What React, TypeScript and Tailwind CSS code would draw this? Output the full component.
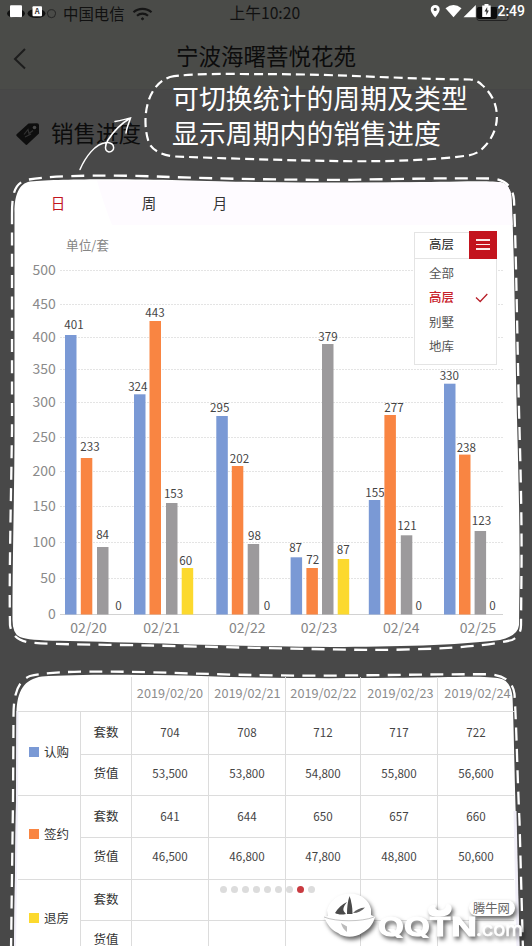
import React, { useState } from "react";

const BLUE = "#7a99d5";
const ORANGE = "#f98542";
const GREY = "#9c9a9c";
const YELLOW = "#fcd92e";

const gridLines = [
  { label: "500", y: 270.5 },
  { label: "450", y: 304.5 },
  { label: "400", y: 337.5 },
  { label: "350", y: 369.5 },
  { label: "300", y: 402.5 },
  { label: "250", y: 437.5 },
  { label: "200", y: 471.5 },
  { label: "150", y: 506.5 },
  { label: "100", y: 542.5 },
  { label: "50", y: 578.5 },
  { label: "0", y: 614.5 },
];

// x / top of the bar, tx / ty of the value above it
const bars = [
  { x: 65, top: 335, fill: BLUE, value: 401, tx: 74, ty: 328.6 },
  { x: 80.8, top: 458, fill: ORANGE, value: 233, tx: 90, ty: 451.3 },
  { x: 97, top: 547, fill: GREY, value: 84, tx: 102.6, ty: 539.3 },
  { x: 113, top: 614, fill: YELLOW, value: 0, tx: 118.5, ty: 610.3 },
  { x: 134, top: 394.3, fill: BLUE, value: 324, tx: 137.8, ty: 391 },
  { x: 149.5, top: 321, fill: ORANGE, value: 443, tx: 155, ty: 316.6 },
  { x: 166, top: 503, fill: GREY, value: 153, tx: 173.6, ty: 498.3 },
  { x: 181.7, top: 568, fill: YELLOW, value: 60, tx: 185.7, ty: 565 },
  { x: 216.3, top: 416, fill: BLUE, value: 295, tx: 219.7, ty: 412 },
  { x: 231.8, top: 466, fill: ORANGE, value: 202, tx: 239.5, ty: 463 },
  { x: 247.7, top: 544, fill: GREY, value: 98, tx: 254.4, ty: 539.6 },
  { x: 263, top: 614, fill: YELLOW, value: 0, tx: 267, ty: 610.3 },
  { x: 290.6, top: 557.3, fill: BLUE, value: 87, tx: 295.6, ty: 551.6 },
  { x: 306.4, top: 568, fill: ORANGE, value: 72, tx: 312.8, ty: 564.3 },
  { x: 322, top: 344, fill: GREY, value: 379, tx: 328, ty: 340.8 },
  { x: 337.7, top: 559, fill: YELLOW, value: 87, tx: 343.2, ty: 553.6 },
  { x: 368.8, top: 500, fill: BLUE, value: 155, tx: 375, ty: 497 },
  { x: 384.4, top: 415, fill: ORANGE, value: 277, tx: 394, ty: 412 },
  { x: 400.8, top: 535.3, fill: GREY, value: 121, tx: 407, ty: 529.5 },
  { x: 413, top: 614, fill: YELLOW, value: 0, tx: 418.6, ty: 609.6 },
  { x: 444, top: 383.7, fill: BLUE, value: 330, tx: 449.3, ty: 380 },
  { x: 459, top: 454.6, fill: ORANGE, value: 238, tx: 466.3, ty: 451.6 },
  { x: 474.6, top: 531, fill: GREY, value: 123, tx: 481.5, ty: 524.6 },
  { x: 487, top: 614, fill: YELLOW, value: 0, tx: 492.5, ty: 609.6 },
];

const days = [
  { label: "02/20", x: 88.5 },
  { label: "02/21", x: 161.5 },
  { label: "02/22", x: 247.3 },
  { label: "02/23", x: 319 },
  { label: "02/24", x: 401.3 },
  { label: "02/25", x: 478 },
];

const dates = ["2019/02/20", "2019/02/21", "2019/02/22", "2019/02/23", "2019/02/24"];

const groups = [
  {
    name: "认购",
    color: "bg-[#7a99d5]",
    rows: "grid-rows-[43px_41px]",
    labelPad: "pb-[3px]",
    count: ["704", "708", "712", "717", "722"],
    amount: ["53,500", "53,800", "54,800", "55,800", "56,600"],
  },
  {
    name: "签约",
    color: "bg-[#f98542]",
    rows: "grid-rows-[42px_42px]",
    labelPad: "pb-[7px]",
    count: ["641", "644", "650", "657", "660"],
    amount: ["46,500", "46,800", "47,800", "48,800", "50,600"],
  },
  {
    name: "退房",
    color: "bg-[#fcd92e]",
    rows: "grid-rows-[41px_41px]",
    labelPad: "pb-[5px]",
    count: ["", "", "", "", ""],
    amount: ["", "", "", "", ""],
  },
];

const types = ["全部", "高层", "别墅", "地库"];
const periods = [
  { label: "日", style: "ml-[50px] w-4" },
  { label: "周", style: "ml-[75px] w-4" },
  { label: "月", style: "ml-[55px] w-4" },
];

const StatusBar = () => (
  <div className="relative flex h-7 items-center bg-[#4a4b48] text-[15.4px] text-[#111]">
    <svg className="absolute left-0 top-0" width="60" height="28">
      <ellipse cx="16" cy="13.5" rx="9" ry="4.500" fill="#111" />
      <ellipse cx="36.500" cy="13.5" rx="9" ry="4.500" fill="#111" />
      <rect x="10" y="5.300" width="12" height="12" rx="1" fill="#fff" />
      <rect x="32.500" y="6.300" width="9.500" height="10" rx="1" fill="#fff" />
      <text x="37.200" y="14" fontSize="7.500" fontWeight="700" textAnchor="middle" fill="#333">
        A
      </text>
      <circle cx="51.500" cy="13.700" r="4" fill="none" stroke="#1a1a1a" strokeWidth="0.8" />
    </svg>
    <span className="-mt-[2px] ml-[63px] leading-7">中国电信</span>
    <svg className="ml-[7px]" width="21" height="16" viewBox="0 0 21 16" fill="none" stroke="#161616" strokeWidth="2.200">
      <path d="M1.500 6.300c5-4.600 13-4.600 18 0" />
      <path d="M5 9.800c3.200-2.900 7.800-2.900 11 0" />
      <circle cx="10.500" cy="12.800" r="1" fill="#161616" strokeWidth="1" />
    </svg>
    <span className="-mt-[2px] ml-[77px] text-[15.700px] leading-7">上午10:20</span>
    <svg className="absolute right-0 top-0" width="107" height="28" viewBox="425 0 107 28">
      <rect x="477" y="7.500" width="31" height="13" rx="2" fill="none" stroke="#222" />
      <rect x="477" y="7" width="20" height="12" rx="2" fill="#0c0c0c" />
      <path
        d="M435.200 5c-2.600 0-4.500 1.900-4.500 4.300 0 3.200 4.500 8.200 4.500 8.200s4.500-5 4.500-8.200c0-2.400-1.900-4.300-4.500-4.300zm0 2.800a1.600 1.600 0 1 1 0 3.200 1.600 1.600 0 0 1 0-3.200z"
        fill="#fff"
      />
      <path d="M445.500 8.200q8-6.400 16 0l-8 9z" fill="#fff" />
      <path d="M475.800 5v12.300h-12.300z" fill="#fff" />
      <path d="M484.500 4h4v1.500h2.200v11.500h-8.500V5.500h2.300z" fill="#fff" />
      <path d="M487.200 7l-2.700 4.600h1.800v3.600l2.500-4.700h-1.600z" fill="#333" />
    </svg>
    <span className="absolute right-[7px] top-0 font-['Roboto',sans-serif] text-[14px] leading-[23px] font-medium text-white">
      2:49
    </span>
  </div>
);

const Header = () => (
  <header className="relative flex h-[62px] items-center justify-center border-b border-[#464646] bg-[#4a4b48]">
    <svg className="absolute left-[13px] top-5" width="14" height="22" fill="none" stroke="#1d1d1d" strokeWidth="2">
      <path d="M12 1L2 11l10 9.500" />
    </svg>
    <h1 className="pb-[6px] text-[22.5px] text-[#0c0c0c]">宁波海曙菩悦花苑</h1>
  </header>
);

const SectionTitle = () => (
  <div className="relative flex h-[89px] items-center pl-4">
    <svg className="-mt-[2px]" width="24" height="24" viewBox="0 0 24 24">
      <path
        d="M12.500 1.500L21 1.200a2 2 0 0 1 2 2v8.300L11.500 22.300a1.500 1.500 0 0 1-2.200 0L.9 14.300a1.500 1.500 0 0 1 0-2.200z"
        fill="#0e0e0e"
      />
      <path d="M8 12.500l4-5 1 4 4-3M9 15l6-3" stroke="#333" strokeWidth="1.200" fill="none" />
      <circle cx="18.500" cy="5.500" r="1.800" fill="#484848" />
    </svg>
    <h2 className="ml-[11px] pb-[3px] text-[22.5px] text-[#0c0c0c]">销售进度</h2>
  </div>
);

// hand drawn bubble and arrow lying over the page header
const Callout = () => (
  <div className="absolute left-[75px] top-[68px] h-[106px] w-[430px]">
    <svg className="absolute inset-0" width="430" height="106" viewBox="75 68 430 106" fill="none" stroke="#fff">
      <path
        d="M170 77C190 73 235 74 270 74.200C340 74 400 79 470 79.500Q477 80 482 85C501 101 502 129 484 147Q478 154 468 155.500C430 160.500 390 161.500 345 161.200C290 160.500 230 158.500 175 156.500Q155 154.500 149 143C141 120 146 85 170 77Z"
        strokeWidth="2.200"
        strokeDasharray="9 5"
      />
      <path
        d="M80 169.500C85 158 95 143 107 142.500C116 143 115 152 109 152C104 151 105 145 108 140C115 129 122 123 130.500 118M115 121.500C121 120.500 126 119 130.500 118C129 123 126.500 128 126 133"
        strokeWidth="1.500"
        strokeLinecap="round"
      />
    </svg>
    <p className="relative pl-[97px] pt-[13px] text-[26.9px] leading-[34.500px] whitespace-nowrap text-white">
      可切换统计的周期及类型
      <br />
      显示周期内的销售进度
    </p>
  </div>
);

const TypeSelect = () => {
  const [selected, setSelected] = useState("高层");

  return (
    <div className="absolute left-[414px] top-[53px] w-[83px] border border-[#e4e4e4] bg-white text-[12.5px]">
      <div className="-mt-[2px] -mr-px flex h-7 items-center justify-between border-b border-[#e4e4e4] pl-[14px]">
        <span className="text-[#222]">{selected}</span>
        <button className="flex h-7 w-7 flex-col items-center justify-center gap-[3px] bg-[#c3141e]">
          <i className="h-[1.5px] w-[14px] bg-[#fbeaea]" />
          <i className="h-[1.5px] w-[14px] bg-[#fbeaea]" />
          <i className="h-[1.5px] w-[14px] bg-[#fbeaea]" />
        </button>
      </div>
      <ul className="pb-[5px] pt-[2px]">
        {types.map((type) => (
          <li
            key={type}
            onClick={() => setSelected(type)}
            className={`flex h-[24.4px] cursor-pointer items-center justify-between pl-[14px] pr-2 ${
              type === selected ? "font-medium text-[#c8202a]" : "text-[#555]"
            }`}
          >
            {type}
            {type === selected && (
              <svg width="13" height="10" fill="none" stroke="#b8202a" strokeWidth="1.300">
                <path d="M1 4.500l4.200 4L12.300 1" />
              </svg>
            )}
          </li>
        ))}
      </ul>
    </div>
  );
};

const Chart = () => (
  <svg className="relative block" width="532" height="425" viewBox="0 225 532 425">
    <text x="66" y="250.300" fontSize="12.700" fill="#858585">
      单位/套
    </text>
    {gridLines.map((line) => (
      <g key={line.label}>
        <line
          x1="60"
          x2="503"
          y1={line.y}
          y2={line.y}
          stroke={line.label === "0" ? "#d2d2d2" : "#e4e4e4"}
          strokeDasharray={line.label === "0" ? undefined : "2 1"}
        />
        <text x="55.700" y={line.y + 4.5} fontSize="14" textAnchor="end" fill="#8a8a8a">
          {line.label}
        </text>
      </g>
    ))}
    {bars.map((bar) => (
      <g key={bar.x}>
        {bar.value > 0 && <rect x={bar.x} y={bar.top} width="11.500" height={614.5 - bar.top} fill={bar.fill} />}
        <text x={bar.tx} y={bar.ty} fontSize="11.600" textAnchor="middle" fill="#444">
          {bar.value}
        </text>
      </g>
    ))}
    {days.map((day) => (
      <text key={day.label} x={day.x} y="633.300" fontSize="14" textAnchor="middle" fill="#858585">
        {day.label}
      </text>
    ))}
  </svg>
);

const ChartCard = () => {
  const [period, setPeriod] = useState("日");

  return (
    <section className="relative h-[493px]">
      <svg className="absolute left-0 -top-2" width="532" height="490" viewBox="0 171 532 490" fill="none">
        <path
          d="M14.500 212C14.500 195 19 183.500 30 181.500C60 178.500 130 178.800 180 180.200C260 183 380 183 440 181.800C465 181 490 180.800 500 182Q510 184 511.500 196C514 240 515 330 516.500 400C518 460 520 520 519.500 580L519 625Q518 636 500 640C450 646 370 647.500 300 646.800C220 646 120 642 60 640.800Q28 640.500 20 637Q12.500 634 12.500 620C12.500 540 15 480 14.500 400Z"
          fill="#fff"
        />
        <path d="M97 180.500Q104 205 112 225H512.500L511 196Q510 184 500 182Q440 182 350 183Q260 183 180 181Z" fill="#fefbff" />
        <path
          d="M12 214C12 192 15 182 29 179.500C60 174.500 120 175 170 177C230 179 290 180 350 179.800C400 179 450 177.800 490 178.500Q512 179 514 200C516 250 517 320 518.500 390C520 450 522 510 521.500 570L521 625Q521 636 512 640C480 648 420 649.800 370 650C300 649 220 647 150 645.500C110 644.500 60 645 30 642.500Q12 640 10 625C9 580 11 500 12 430Z"
          stroke="#fff"
          strokeWidth="2.300"
          strokeDasharray="13 8.300"
        />
      </svg>
      <nav className="relative flex h-[46px] items-center pt-px text-[14.5px] text-[#333]">
        {periods.map((item) => (
          <button
            key={item.label}
            onClick={() => setPeriod(item.label)}
            className={`${item.style} ${item.label === period ? "text-[#c3141e]" : ""}`}
          >
            {item.label}
          </button>
        ))}
      </nav>
      <Chart />
      <TypeSelect />
    </section>
  );
};

const cell = "flex items-center justify-center border-r border-[#dcdcdc] whitespace-nowrap";
const columns = "grid-cols-[51px_77px_77px_75px_77px_76px]";

const TableCard = () => (
  <section className="relative h-[274px]">
    <svg className="absolute left-0 -top-2" width="532" height="283" viewBox="0 663 532 283" fill="none">
      <path
        d="M14 950L16 800L16.500 712C17 690 24 678 42 675.500C80 673 160 673.500 230 676C300 678 390 677 440 676.300C470 675.500 490 675.500 500 677.500Q511 680 512.500 696C514 730 514.500 780 516 820L519.500 950Z"
        fill="#fff"
      />
      <path d="M17.500 710L17 800L15 948" stroke="#f1eff9" strokeWidth="2" />
      <path d="M515 810L518 948" stroke="#f1eff9" strokeWidth="3" />
      <path
        d="M11 950L13 800L13.500 715C13.500 692 18 680 30 675C50 670 90 670 150 671.200C210 673 270 675.200 340 674.500C400 674 450 673 490 673.300Q512 675 514.500 693C516.500 725 517.500 780 519.500 820L523 950"
        stroke="#fff"
        strokeWidth="2.300"
        strokeDasharray="13 8.300"
      />
    </svg>
    <div className="relative ml-[18px] w-[497px] pt-[5px] text-[12.5px] text-[#333]">
      <div className="flex h-[35px] border-b border-[#dcdcdc]">
        <div className="w-[114px] border-r border-[#dcdcdc]" />
        <div className="grid grid-cols-[77px_77px_75px_77px_76px] text-[12.7px] text-[#8c8c8c]">
          {dates.map((date, i) => (
            <div key={date} className={`${cell} pb-[2px] last:border-r-0 ${i === 0 ? "" : i > 2 ? "pl-[3px]" : "pl-px"}`}>
              {date}
            </div>
          ))}
        </div>
      </div>
      {groups.map((group) => (
        <div key={group.name} className="flex">
          <div
            className={`flex w-[63px] items-center gap-[5px] border-r border-b border-[#dcdcdc] pl-[11px] ${group.labelPad}`}
          >
            <i className={`size-[10px] ${group.color}`} />
            {group.name}
          </div>
          <div className={`grid ${columns} ${group.rows}`}>
            <div className={`${cell} border-b pb-px`}>套数</div>
            {group.count.map((value, i) => (
              <div key={i} className={`${cell} border-b text-[11.6px] text-[#444] ${i === 4 ? "border-r-0" : ""}`}>
                {value}
              </div>
            ))}
            <div className={`${cell} border-b pb-[4px]`}>货值</div>
            {group.amount.map((value, i) => (
              <div key={i} className={`${cell} border-b pb-[3px] text-[11.6px] text-[#444] ${i === 4 ? "border-r-0" : ""}`}>
                {value}
              </div>
            ))}
          </div>
        </div>
      ))}
    </div>
  </section>
);

const PageDots = () => (
  <div className="absolute left-[219.5px] top-[885.5px] flex gap-[4.1px]">
    {[0, 1, 2, 3, 4, 5, 6, 7, 8].map((dot) => (
      <i key={dot} className={`size-[7px] rounded-full ${dot === 7 ? "bg-[#c93a40]" : "bg-[#dcdcdc]"}`} />
    ))}
  </div>
);

const Watermark = () => (
  <svg className="absolute bottom-0 right-0" width="212" height="66" viewBox="320 880 212 66">
    <g className="drop-shadow-[2px_3px_2px_rgba(0,0,0,0.6)]">
      <path
        d="M327 910C330 900 339 893.500 350 893.500C361 893.500 369 900 371 909L371 915L375 917C373 925 368 930 362 933C355 938 344 938 338 933C331 930 327 924 324 917L328 916Z"
        fill="#fff"
      />
    </g>
    <path d="M349.500 896C347.500 902 347 908 347 914H352.500C352.500 908 351.500 901 349.500 896Z" fill="#4a4a4a" />
    <path d="M335 913C338 908 342 904.500 347 902C344 906 342.500 909 344 911.500L346 914C341 915 338 914.500 335 913Z" fill="#4a4a4a" />
    <path d="M353 913C356 909.500 360 908 365 907.500C362 911 358 913 353 913Z" fill="#606060" />
    <path d="M324 917C336 922 362 922 374 917" fill="none" stroke="#b5b5b5" strokeWidth="0.800" />
    <path d="M341 923L347 926.500V932C344 930 342 927 341 923Z" fill="#bcbcbc" />
    <g className="drop-shadow-[2px_3px_2px_rgba(0,0,0,0.6)]">
      <path d="M428 910C429 905 435 903.500 436 906C434 909 438 911 442 910C446 909 446 905 447 904C452 904 453 909 450 913C448 917 434 918 430 915Q428 913 428 910Z" fill="#fff" />
      <text
        x="378"
        y="936"
        textLength="99"
        lengthAdjust="spacingAndGlyphs"
        fontFamily="Inter, sans-serif"
        fontSize="25"
        fontWeight="600"
        fill="#fff"
        stroke="#fff"
        strokeWidth="1.200"
      >
        QQTN
      </text>
      <text
        x="476"
        y="936"
        textLength="47"
        lengthAdjust="spacingAndGlyphs"
        fontFamily="Inter, sans-serif"
        fontSize="20"
        fontWeight="400"
        fill="#fff"
        stroke="#fff"
        strokeWidth="0.600"
      >
        .com
      </text>
      <rect x="469" y="900" width="46" height="16" rx="8" fill="#fff" />
    </g>
    <text x="473" y="912.800" fontSize="12.300" fill="#666">
      腾牛网
    </text>
  </svg>
);

const App = () => {
  return (
    <main className="relative h-[946px] w-[532px] overflow-hidden bg-[#484848] font-['Noto_Sans_CJK_SC',sans-serif]">
      <StatusBar />
      <Header />
      <SectionTitle />
      <ChartCard />
      <TableCard />
      <Callout />
      <PageDots />
      <Watermark />
    </main>
  );
};

export default App;
